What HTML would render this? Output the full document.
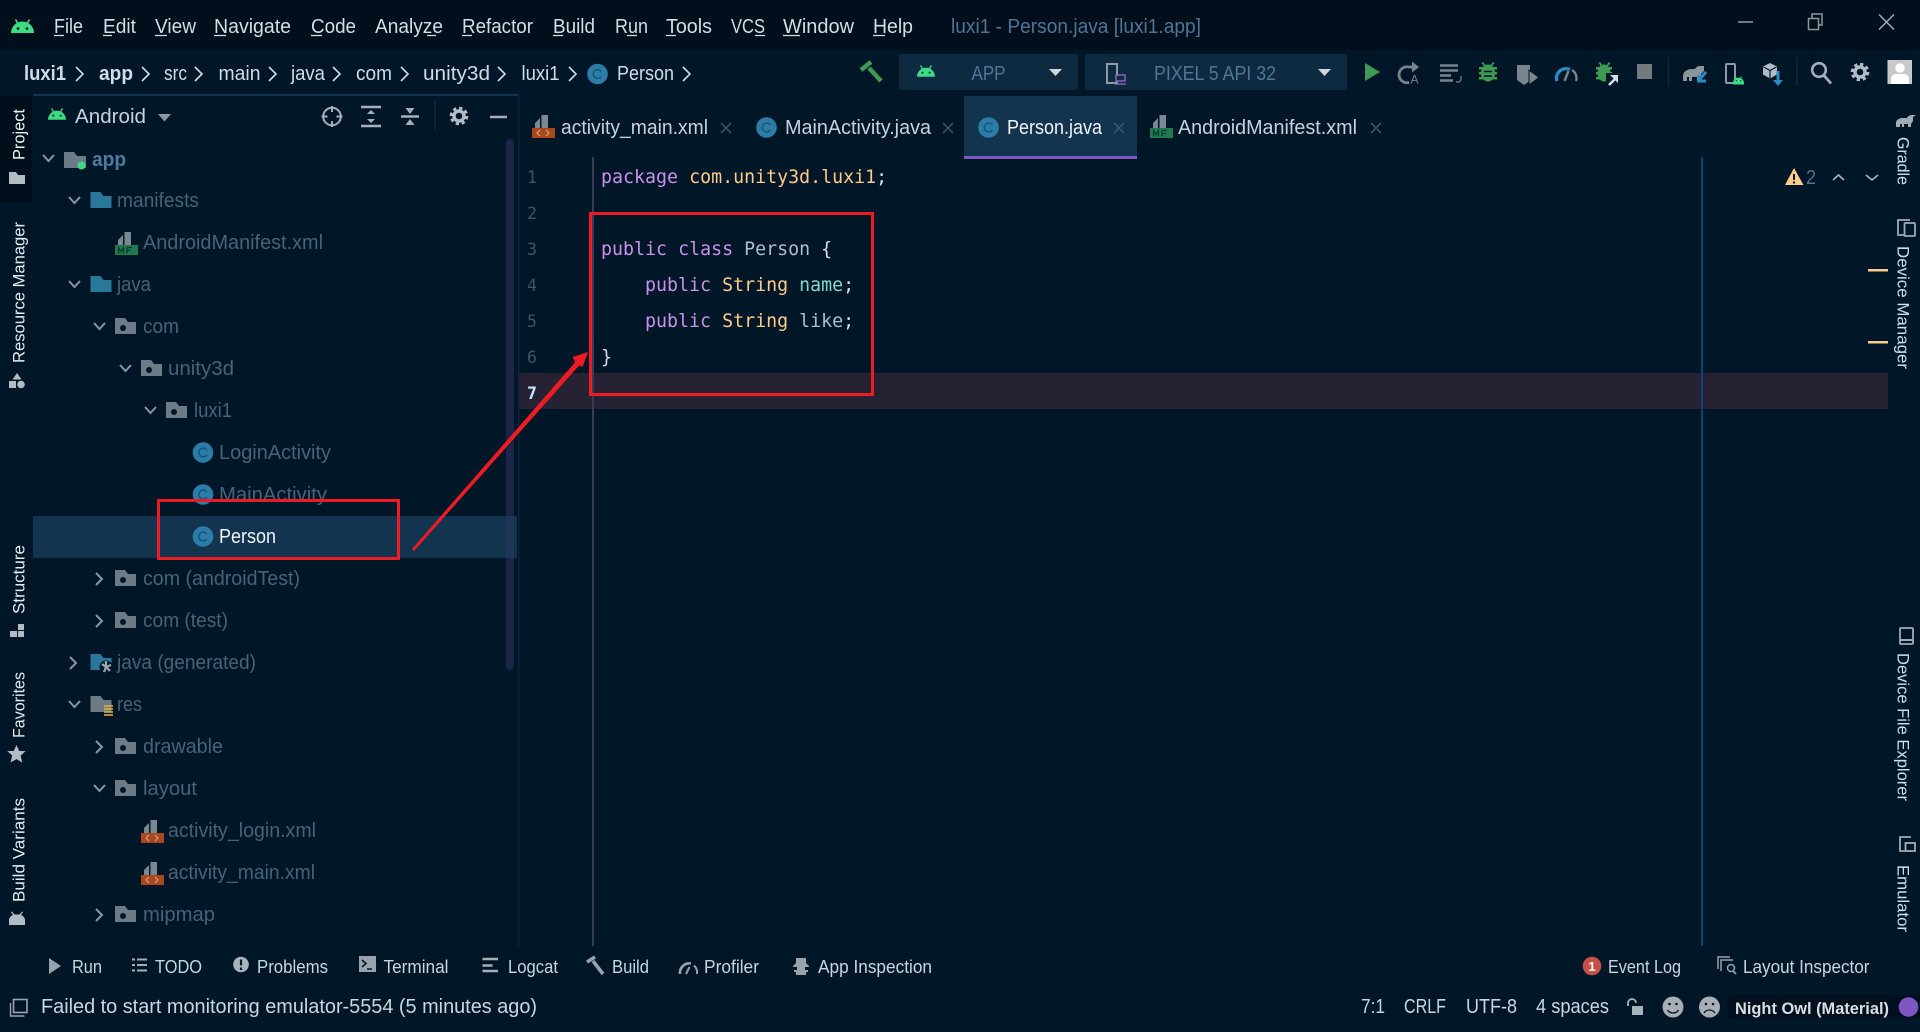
<!DOCTYPE html>
<html lang="en">
<head>
<meta charset="utf-8">
<title>luxi1 - Person.java [luxi1.app]</title>
<style>
html,body{margin:0;padding:0;background:#011627;width:1920px;height:1032px;overflow:hidden}
svg{display:block}
text{font-family:"Liberation Sans",sans-serif;font-size:20px;white-space:pre}
.m{fill:#d3dee6}
.b{fill:#d0dde6}
.t{fill:#466379}
.f{fill:#c4d3de}
.d{fill:#c8d6e0;font-size:18px}
.s{fill:#c8d8e2}
.v{fill:#e3edf3;font-size:17px}
.r{fill:#c5e0f5;font-size:17px}
.c{font-family:"DejaVu Sans Mono","Liberation Mono",monospace;font-size:18.3px;fill:#d6deeb}
.n{font-family:"DejaVu Sans Mono","Liberation Mono",monospace;font-size:16.5px;fill:#3c566c}
.k{fill:#c792ea}.o{fill:#ffcb8b}.g{fill:#7fdbca}.p{fill:#a9c0cd}
</style>
</head>
<body>
<svg xmlns="http://www.w3.org/2000/svg" width="1920" height="1032" viewBox="0 0 1920 1032">
<defs>
<g id="cls"><circle cx="10.5" cy="10.5" r="10.3" fill="#2b7ca6"/><path d="M14.3 8a4.4 4.4 0 1 0 0 5" fill="none" stroke="#17587a" stroke-width="1.6"/></g>
<g id="blue"><path d="M0 0h10l3 4h8v12H0z" fill="#2a7899"/></g>
<g id="pkg"><path d="M0 0h10l3 4h8v12H0z" fill="#6d7b86"/><circle cx="8" cy="10" r="3" fill="#011627"/></g>
<g id="down"><path d="M1 1l5.500 6L12 1" fill="none" stroke="#8798a4" stroke-width="2"/></g>
<g id="right"><path d="M1 1l6 6-6 6" fill="none" stroke="#8798a4" stroke-width="2"/></g>
<g id="file"><path d="M9.500 0h6.500v13H9.500zM3 13V8L8 3V13z" fill="#7a8893"/></g>
<g id="xml"><use href="#file"/><rect y="13" width="23" height="10" fill="#a8481c"/><path d="M8 15l-3 3 3 3M14 15l3 3-3 3" fill="none" stroke="#d8a080" stroke-width="1.200"/></g>
<g id="mf"><use href="#file"/><rect y="13" width="23" height="10" fill="#207a50"/><path d="M3.500 21.500v-6l2.500 4 2.500-4v6M12 21.500v-6h5M12 18.500h4" fill="none" stroke="#0c3d2a" stroke-width="1.300"/></g>
<g id="droid"><path d="M0 13a10 10 0 0 1 20 0z" fill="#3ddc84"/><path d="M4 0.500l2.500 4.500M16 0.500l-2.500 4.500" stroke="#3ddc84" stroke-width="1.500"/><circle cx="6" cy="8.500" r="1.100" fill="#011627"/><circle cx="14" cy="8.500" r="1.100" fill="#011627"/></g>
<g id="gear"><circle r="7.800" fill="none" stroke="#b2bcc4" stroke-width="3" stroke-dasharray="3.300 2.800"/><circle r="5" fill="none" stroke="#b2bcc4" stroke-width="3.400"/></g>
</defs>

<rect width="1920" height="1032" fill="#011627"/>
<rect width="1920" height="50" fill="#010e1b"/>

<!-- Title bar -->
<g transform="translate(11,19)"><path d="M0 14a11.500 11.500 0 0 1 23 0z" fill="#3ddc84"/><path d="M4.500 0.500l3 5M18.500 0.500l-3 5" stroke="#3ddc84" stroke-width="1.700"/><circle cx="7" cy="9.500" r="1.300" fill="#010e1b"/><circle cx="16" cy="9.500" r="1.300" fill="#010e1b"/></g>
<text class="m" x="54" y="33" textLength="29" lengthAdjust="spacingAndGlyphs">File</text>
<text class="m" x="103" y="33" textLength="33" lengthAdjust="spacingAndGlyphs">Edit</text>
<text class="m" x="155" y="33" textLength="41" lengthAdjust="spacingAndGlyphs">View</text>
<text class="m" x="214" y="33" textLength="77" lengthAdjust="spacingAndGlyphs">Navigate</text>
<text class="m" x="311" y="33" textLength="45" lengthAdjust="spacingAndGlyphs">Code</text>
<text class="m" x="375" y="33" textLength="68" lengthAdjust="spacingAndGlyphs">Analyze</text>
<text class="m" x="462" y="33" textLength="71" lengthAdjust="spacingAndGlyphs">Refactor</text>
<text class="m" x="553" y="33" textLength="42" lengthAdjust="spacingAndGlyphs">Build</text>
<text class="m" x="615" y="33" textLength="33" lengthAdjust="spacingAndGlyphs">Run</text>
<text class="m" x="666" y="33" textLength="46" lengthAdjust="spacingAndGlyphs">Tools</text>
<text class="m" x="731" y="33" textLength="34" lengthAdjust="spacingAndGlyphs">VCS</text>
<text class="m" x="783" y="33" textLength="71" lengthAdjust="spacingAndGlyphs">Window</text>
<text class="m" x="873" y="33" textLength="40" lengthAdjust="spacingAndGlyphs">Help</text>
<path d="M54 35.500h10M103 35.500h9M155 35.500h12M214 35.500h12M311 35.500h11M427 35.500h9M462 35.500h10M553 35.500h10M627 35.500h10M666 35.500h10M755 35.500h10M783 35.500h17M873 35.500h12" stroke="#d3dee6" stroke-width="1.200"/>
<text x="951" y="33" textLength="250" lengthAdjust="spacingAndGlyphs" fill="#4f7596">luxi1 - Person.java [luxi1.app]</text>
<path d="M1738 22h15" stroke="#8a98a2" stroke-width="1.600"/>
<path d="M1808.500 18.500h10v11h-10zM1812 18v-4h10v11h-3.500" fill="none" stroke="#8a98a2" stroke-width="1.500"/>
<path d="M1879 14.500l15 15M1894 14.500l-15 15" stroke="#a0adb6" stroke-width="1.500"/>

<!-- Breadcrumb -->
<g style="font-weight:bold"><text class="b" x="24" y="80" textLength="42" lengthAdjust="spacingAndGlyphs">luxi1</text>
<text class="b" x="99" y="80" textLength="34" lengthAdjust="spacingAndGlyphs">app</text></g>
<text class="b" x="164" y="80" textLength="23" lengthAdjust="spacingAndGlyphs">src</text>
<text class="b" x="218.500" y="80" textLength="42" lengthAdjust="spacingAndGlyphs">main</text>
<text class="b" x="291" y="80" textLength="34" lengthAdjust="spacingAndGlyphs">java</text>
<text class="b" x="356" y="80" textLength="36" lengthAdjust="spacingAndGlyphs">com</text>
<text class="b" x="423" y="80" textLength="67" lengthAdjust="spacingAndGlyphs">unity3d</text>
<text class="b" x="521.500" y="80" textLength="38" lengthAdjust="spacingAndGlyphs">luxi1</text>
<text class="b" x="617" y="80" textLength="57" lengthAdjust="spacingAndGlyphs">Person</text>
<path d="M76 67l7 7-7 7M142 67l7 7-7 7M195 67l7 7-7 7M269 67l7 7-7 7M333 67l7 7-7 7M401 67l7 7-7 7M498 67l7 7-7 7M569 67l7 7-7 7M683 67l7 7-7 7" fill="none" stroke="#d0dde6" stroke-width="1.600"/>
<use href="#cls" x="587" y="63.500"/>

<!-- Toolbar -->
<path d="M861 70l10-8M869 68l12 13" stroke="#3f9a52" stroke-width="4.500" fill="none"/>
<rect x="899" y="54" width="179" height="36" rx="2" fill="#0d2a40"/>
<rect x="1085" y="54" width="262" height="36" rx="2" fill="#0d2a40"/>
<use href="#droid" transform="translate(917,65) scale(.9)"/>
<text x="971.500" y="80" textLength="34" lengthAdjust="spacingAndGlyphs" fill="#527596">APP</text>
<path d="M1049 69h13l-6.500 7z" fill="#cfd8de"/>
<path d="M1107 64h10v19h-10z" fill="none" stroke="#8f9aa2" stroke-width="2"/>
<rect x="1116" y="75" width="9" height="6" fill="#0d2a40" stroke="#8e6ac0" stroke-width="1.400"/><path d="M1115 84h11" stroke="#8e6ac0" stroke-width="1.400"/>
<text x="1154" y="80" textLength="122" lengthAdjust="spacingAndGlyphs" fill="#527596">PIXEL 5 API 32</text>
<path d="M1318 69h13l-6.500 7z" fill="#cfd8de"/>
<path d="M1365 63l15 9-15 9z" fill="#3f9a52"/>
<path d="M1415 67h-6a8 8 0 1 0 0 15.500" fill="none" stroke="#7a848c" stroke-width="2.800"/><path d="M1412 61.500l7 5.500-7 5.500z" fill="#7a848c"/><text x="1410.500" y="83.500" style="font-size:12px" fill="#7a848c">A</text>
<path d="M1440 65.500h18M1440 70.500h18M1440 75.500h11M1440 80.500h13" stroke="#7a848c" stroke-width="2.400"/><path d="M1461 76v3a3 3 0 0 1-3 3h-2" fill="none" stroke="#7a848c" stroke-width="1.200"/>
<g fill="#3f9a52"><ellipse cx="1488" cy="73" rx="7" ry="8.500"/><path d="M1479 67h18v2.500h-18zM1479 72h18v2.500h-18zM1479 77h18v2.500h-18zM1483 62l3 4-1.500 1-3-4zM1493 62l-3 4 1.500 1 3-4z"/></g><path d="M1484 71.500h8M1484 76h8" stroke="#011627" stroke-width="1.500"/>
<path d="M1517 65h13v16l-6 4-7-5z" fill="#7a848c"/><path d="M1529 70l10 7.500-10 7.500z" fill="#7a848c" stroke="#011627"/>
<path d="M1557 81a9.500 9.500 0 0 1 13-11.500" fill="none" stroke="#2a8bc5" stroke-width="3.400"/><path d="M1564.500 81l4-10M1572 70a9.500 9.500 0 0 1 4 11" stroke="#7a848c" stroke-width="2.400" fill="none"/>
<g fill="#3f9a52"><ellipse cx="1604" cy="73" rx="6.500" ry="8.500"/><path d="M1596 67h16v2.500h-16zM1596 72h16v2.500h-16zM1596 77h16v2.500h-16z"/><path d="M1600 62l3 4-1.500 1-3-4zM1609 62l-3 4 1.500 1 3-4z"/></g>
<rect x="1606" y="73" width="12" height="13" fill="#011627"/>
<path d="M1609 85l6-6" stroke="#d3dee6" stroke-width="2.600"/><path d="M1610 75h8v8z" fill="#d3dee6"/>
<rect x="1637" y="64" width="15" height="15" fill="#74797e"/>
<path d="M1668.500 57v29M1797 57v29" stroke="#0d2a40" stroke-width="1.500"/>
<path d="M1683 81v-6a9 7 0 0 1 9-6h3a6 5 0 0 1 4-3h5v5l-3 3v7h-4v-4h-5v4h-3v-4h-2v4z" fill="#8a949b"/>
<path d="M1706 72l-7 8v-5M1699 81h7" fill="none" stroke="#2a8bc5" stroke-width="3"/>
<rect x="1726" y="64" width="9" height="19" fill="none" stroke="#8f9aa2" stroke-width="2" rx="1"/>
<g transform="translate(1733,76) scale(.55)"><use href="#droid"/></g><rect x="1733" y="82.500" width="11" height="2" fill="#3ddc84"/>
<path d="M1770 63l7 3.500v8l-7 4-7-4v-8z" fill="#b2bcc4"/><path d="M1763.500 67l6.500 3.500 6.500-3.500M1770 70.500v8" stroke="#011627" stroke-width="1.200" fill="none"/>
<path d="M1778 71v12" stroke="#2a8bc5" stroke-width="3"/><path d="M1773 80h10l-5 6z" fill="#2a8bc5"/>
<circle cx="1819" cy="70" r="6.800" fill="none" stroke="#a6b0b8" stroke-width="2.600"/><path d="M1824 75.500l7 8" stroke="#a6b0b8" stroke-width="2.800"/>
<use href="#gear" x="1860" y="72"/>
<rect x="1887.500" y="60" width="24.500" height="24" fill="#c9c9c9"/><circle cx="1900" cy="68" r="4.800" fill="#fff"/><path d="M1891 84v-5a5 5 0 0 1 5-5h8a5 5 0 0 1 5 5v5z" fill="#fff"/>

<!-- Left strip -->
<rect x="0" y="96" width="32" height="106" fill="#010e1b"/>
<text class="v" transform="translate(24.500,160) rotate(-90)" textLength="51" lengthAdjust="spacingAndGlyphs" style="fill:#f2f5f7">Project</text>
<path d="M9 172h7l2 3h7v9H9z" fill="#b2bcc4"/>
<text class="v" transform="translate(24.500,363) rotate(-90)" textLength="141" lengthAdjust="spacingAndGlyphs">Resource Manager</text>
<path d="M17 373l4.500 6.500h-9z" fill="#b2bcc4"/><rect x="9" y="381" width="7" height="7" fill="#b2bcc4"/><circle cx="21" cy="384.500" r="3.800" fill="#b2bcc4"/>
<text class="v" transform="translate(24.500,614) rotate(-90)" textLength="69" lengthAdjust="spacingAndGlyphs">Structure</text>
<path d="M18 624h6v6h-6zM10 631h7v6h-7zM18 631h6v6h-6z" fill="#b2bcc4"/>
<text class="v" transform="translate(24.500,738) rotate(-90)" textLength="66" lengthAdjust="spacingAndGlyphs">Favorites</text>
<path d="M16.500 745l2.700 6h6.500l-5 4.500 1.500 7-5.700-3.400-6 3.400 1.700-7-5-4.500h6.500z" fill="#b2bcc4"/>
<text class="v" transform="translate(24.500,902) rotate(-90)" textLength="104" lengthAdjust="spacingAndGlyphs">Build Variants</text>
<path d="M9 925v-5a8 6 0 0 1 4-5l-2-3 1-.5 2.500 3h5l2.500-3 1 .5-2 3a8 6 0 0 1 4 5v5z" fill="#b2bcc4"/>

<!-- Project panel -->
<rect x="33" y="94" width="485" height="2" fill="#0d3552"/>
<use href="#droid" transform="translate(48,108) scale(.9)"/>
<text x="75" y="123" textLength="71" lengthAdjust="spacingAndGlyphs" fill="#c4d3de">Android</text>
<path d="M158 114h13l-6.500 7.500z" fill="#8798a4"/>
<circle cx="332" cy="116.500" r="8.800" fill="none" stroke="#a6b0b8" stroke-width="2"/><path d="M332 106v6M332 121v6M321.500 116.500h6M336.500 116.500h6" stroke="#a6b0b8" stroke-width="2"/>
<path d="M361 107h20M361 126h20" stroke="#a6b0b8" stroke-width="2.400"/><path d="M371 110l4 4h-8zM371 123l4-4h-8z" fill="#a6b0b8"/>
<path d="M401 116.500h18" stroke="#a6b0b8" stroke-width="2.400"/><path d="M410 114l-4.500-6h9zM410 119l-4.500 6h9z" fill="#a6b0b8"/>
<path d="M435 100v30" stroke="#0d2a40" stroke-width="1.500"/>
<use href="#gear" x="459" y="116"/>
<path d="M490 117h17" stroke="#a6b0b8" stroke-width="2.600"/>
<rect x="33" y="516" width="484" height="42" fill="#13344f"/>
<rect x="506" y="139" width="8" height="531" rx="4" fill="#1a2547"/>
<rect x="506" y="516" width="8" height="42" fill="#1e3558"/>
<rect x="518" y="94" width="1.500" height="852" fill="#0c2437"/>

<!-- Tree -->
<use href="#down" x="42" y="154"/>
<path d="M64 152h10l3 4h9v12H64z" fill="#6d7b86"/><circle cx="81.500" cy="165.500" r="4" fill="#3ddc84"/>
<text x="92" y="166" textLength="34" lengthAdjust="spacingAndGlyphs" fill="#4f7a9e" style="font-weight:bold">app</text>
<use href="#down" x="68" y="196"/><use href="#blue" x="90.500" y="192"/>
<text class="t" x="117" y="207" textLength="82" lengthAdjust="spacingAndGlyphs">manifests</text>
<use href="#mf" x="115" y="232"/>
<text class="t" x="143" y="249" textLength="180" lengthAdjust="spacingAndGlyphs">AndroidManifest.xml</text>
<use href="#down" x="68" y="280"/><use href="#blue" x="90.500" y="276"/>
<text class="t" x="117" y="291" textLength="34" lengthAdjust="spacingAndGlyphs">java</text>
<use href="#down" x="93" y="322"/><use href="#pkg" x="115" y="318"/>
<text class="t" x="143" y="333" textLength="36" lengthAdjust="spacingAndGlyphs">com</text>
<use href="#down" x="119" y="364"/><use href="#pkg" x="141" y="360"/>
<text class="t" x="168" y="375" textLength="66" lengthAdjust="spacingAndGlyphs">unity3d</text>
<use href="#down" x="144" y="406"/><use href="#pkg" x="166" y="402"/>
<text class="t" x="194" y="417" textLength="38" lengthAdjust="spacingAndGlyphs">luxi1</text>
<use href="#cls" x="192.500" y="442"/>
<text class="t" x="219" y="459" textLength="112" lengthAdjust="spacingAndGlyphs">LoginActivity</text>
<use href="#cls" x="192.500" y="484"/>
<text class="t" x="219" y="501" textLength="108" lengthAdjust="spacingAndGlyphs">MainActivity</text>
<use href="#cls" x="192.500" y="526"/>
<text x="219" y="543" textLength="57" lengthAdjust="spacingAndGlyphs" fill="#f0f4f7">Person</text>
<use href="#right" x="95" y="572"/><use href="#pkg" x="115" y="570"/>
<text class="t" x="143" y="585" textLength="157" lengthAdjust="spacingAndGlyphs">com (androidTest)</text>
<use href="#right" x="95" y="614"/><use href="#pkg" x="115" y="612"/>
<text class="t" x="143" y="627" textLength="85" lengthAdjust="spacingAndGlyphs">com (test)</text>
<use href="#right" x="69" y="656"/><use href="#blue" x="90.500" y="654"/>
<circle cx="106" cy="667" r="6.500" fill="#011627"/><path d="M106 661v6l-4-3M106 667l5-2M106 667l-2 5M106 667l4 4" stroke="#9aa8b2" stroke-width="2.200" fill="none"/>
<text class="t" x="117" y="669" textLength="139" lengthAdjust="spacingAndGlyphs">java (generated)</text>
<use href="#down" x="68" y="700"/><path d="M90.500 696h10l3 4h8v12H90.500z" fill="#6d7b86"/>
<path d="M104 706h9M104 709h9M104 712h9M104 715h9" stroke="#eab13e" stroke-width="1.500"/>
<text class="t" x="117" y="711" textLength="25" lengthAdjust="spacingAndGlyphs">res</text>
<use href="#right" x="95" y="740"/><use href="#pkg" x="115" y="738"/>
<text class="t" x="143" y="753" textLength="80" lengthAdjust="spacingAndGlyphs">drawable</text>
<use href="#down" x="93" y="784"/><use href="#pkg" x="115" y="780"/>
<text class="t" x="143" y="795" textLength="54" lengthAdjust="spacingAndGlyphs">layout</text>
<use href="#xml" x="141" y="820"/>
<text class="t" x="168" y="837" textLength="148" lengthAdjust="spacingAndGlyphs">activity_login.xml</text>
<use href="#xml" x="141" y="862"/>
<text class="t" x="168" y="879" textLength="147" lengthAdjust="spacingAndGlyphs">activity_main.xml</text>
<use href="#right" x="95" y="908"/><use href="#pkg" x="115" y="906"/>
<text class="t" x="143" y="921" textLength="72" lengthAdjust="spacingAndGlyphs">mipmap</text>

<!-- Tabs -->
<rect x="964" y="96" width="173" height="60" fill="#13344f"/>
<rect x="964" y="156" width="173" height="3" fill="#7e57c2"/>
<use href="#xml" x="532" y="115"/>
<text class="f" x="561" y="134" textLength="147" lengthAdjust="spacingAndGlyphs">activity_main.xml</text>
<path d="M721 123l10 10M731 123l-10 10M943 123l10 10M953 123l-10 10M1114 123l10 10M1124 123l-10 10M1371 123l10 10M1381 123l-10 10" stroke="#445a6c" stroke-width="1.400"/>
<use href="#cls" x="756" y="117"/>
<text class="f" x="785" y="134" textLength="146" lengthAdjust="spacingAndGlyphs">MainActivity.java</text>
<use href="#cls" x="978" y="117"/>
<text x="1007" y="134" textLength="95" lengthAdjust="spacingAndGlyphs" fill="#f0f4f7">Person.java</text>
<use href="#mf" x="1150" y="115"/>
<text class="f" x="1178" y="134" textLength="179" lengthAdjust="spacingAndGlyphs">AndroidManifest.xml</text>

<!-- Editor -->
<rect x="519" y="373" width="1369" height="36" fill="#262233"/>
<rect x="592" y="157" width="2" height="789" fill="#3b3a5c"/>
<rect x="1701" y="157" width="2" height="789" fill="#0b4570"/>
<text class="n" x="527" y="183">1</text>
<text class="n" x="527" y="219">2</text>
<text class="n" x="527" y="255">3</text>
<text class="n" x="527" y="291">4</text>
<text class="n" x="527" y="327">5</text>
<text class="n" x="527" y="363">6</text>
<text class="n" x="527" y="399" style="fill:#c5e4fd;font-weight:bold">7</text>
<text class="c" x="601" y="183"><tspan class="k">package</tspan> <tspan class="o">com.unity3d.luxi1</tspan>;</text>
<text class="c" x="601" y="255"><tspan class="k">public</tspan> <tspan class="k">class</tspan> <tspan class="p">Person</tspan> {</text>
<text class="c" x="645" y="291"><tspan class="k">public</tspan> <tspan class="o">String</tspan> <tspan class="g">name</tspan>;</text>
<text class="c" x="645" y="327"><tspan class="k">public</tspan> <tspan class="o">String</tspan> <tspan class="p">like</tspan>;</text>
<text class="c" x="601" y="363">}</text>
<path d="M1794 168l9.500 17h-18.500z" fill="#ffcb8b"/><path d="M1794 174v6M1794 181.500v2" stroke="#011627" stroke-width="2"/>
<text x="1806" y="184" textLength="10" lengthAdjust="spacingAndGlyphs" fill="#4f7596">2</text>
<path d="M1833 180l5.500-5 5.500 5M1866 175l6 5 6-5" fill="none" stroke="#a8b6c0" stroke-width="1.600"/>
<rect x="1868" y="269" width="20" height="2.500" fill="#ffcb8b"/>
<rect x="1868" y="341" width="20" height="2.500" fill="#ffcb8b"/>

<!-- Right strip -->
<path d="M1896 127v-5a7 5 0 0 1 8-4h3a5 4 0 0 1 5-3l4 0-3 2v4l-2 3v3h-3v-3h-4v3h-2v-3h-2v3z" fill="#a0acb4"/>
<text class="r" transform="translate(1897.500,137) rotate(90)" textLength="48" lengthAdjust="spacingAndGlyphs">Gradle</text>
<path d="M1898 234v-14h12M1897 235h7" fill="none" stroke="#a0acb4" stroke-width="1.800"/><rect x="1904.500" y="223" width="10.500" height="13" rx="1" fill="none" stroke="#a0acb4" stroke-width="1.800"/>
<text class="r" transform="translate(1897.500,246) rotate(90)" textLength="123" lengthAdjust="spacingAndGlyphs">Device Manager</text>
<rect x="1900" y="628" width="13" height="16" rx="1" fill="none" stroke="#a0acb4" stroke-width="1.800"/><path d="M1900 640h13" stroke="#a0acb4" stroke-width="2"/>
<text class="r" transform="translate(1897.500,653) rotate(90)" textLength="148" lengthAdjust="spacingAndGlyphs">Device File Explorer</text>
<path d="M1900 850v-13h11M1899 851h6" fill="none" stroke="#a0acb4" stroke-width="1.800"/><rect x="1905.500" y="843" width="9.500" height="8" fill="none" stroke="#a0acb4" stroke-width="1.800"/>
<text class="r" transform="translate(1897.500,865) rotate(90)" textLength="67" lengthAdjust="spacingAndGlyphs">Emulator</text>

<!-- Bottom tool bar -->
<path d="M49 958l12 8-12 8z" fill="#98a4ac"/>
<text class="d" x="72" y="973" textLength="30" lengthAdjust="spacingAndGlyphs">Run</text>
<path d="M132 959.500h3M137 959.500h10M132 965h3M137 965h10M132 970.500h3M137 970.500h10" stroke="#a4b0b8" stroke-width="2"/>
<text class="d" x="155" y="973" textLength="47" lengthAdjust="spacingAndGlyphs">TODO</text>
<circle cx="241" cy="964.500" r="7.800" fill="#a8b4bc"/><path d="M241 959.500v6M241 967.500v2.500" stroke="#011627" stroke-width="2.200"/>
<text class="d" x="257" y="973" textLength="71" lengthAdjust="spacingAndGlyphs">Problems</text>
<rect x="359" y="956" width="17" height="16" fill="#98a4ac"/><path d="M362 960l4 3.500-4 3.500M367 969h5" fill="none" stroke="#011627" stroke-width="1.600"/>
<text class="d" x="383.500" y="973" textLength="65" lengthAdjust="spacingAndGlyphs">Terminal</text>
<path d="M482.500 959h15.500M482.500 965.500h10M482.500 971h15.500" stroke="#a4b0b8" stroke-width="2.400"/>
<text class="d" x="508" y="973" textLength="50" lengthAdjust="spacingAndGlyphs">Logcat</text>
<path d="M587 962l8-5M593 961l10 13" stroke="#98a4ac" stroke-width="3.500" fill="none"/>
<text class="d" x="612" y="973" textLength="37" lengthAdjust="spacingAndGlyphs">Build</text>
<path d="M680 974a9.500 9.500 0 0 1 11-10.500" fill="none" stroke="#98a4ac" stroke-width="2.600"/><path d="M686 974l3.500-7M694 965.500a9.500 9.500 0 0 1 3 8.500" stroke="#98a4ac" stroke-width="2" fill="none"/>
<text class="d" x="704" y="973" textLength="55" lengthAdjust="spacingAndGlyphs">Profiler</text>
<path d="M796 958h10v5l3 3v1h-4v3h3v2h-14v-2h3v-3h-4v-1l3-3z" fill="#98a4ac"/><rect x="796" y="972" width="10" height="3" fill="#98a4ac"/>
<text class="d" x="818" y="973" textLength="114" lengthAdjust="spacingAndGlyphs">App Inspection</text>
<circle cx="1592" cy="966" r="9.300" fill="#c8504a"/><text x="1592" y="971" text-anchor="middle" style="font-size:13px;font-weight:bold" fill="#fff">1</text>
<text class="d" x="1608" y="973" textLength="73" lengthAdjust="spacingAndGlyphs">Event Log</text>
<path d="M1718 969v-12h12M1721 971v-11h12" fill="none" stroke="#98a4ac" stroke-width="1.500"/><circle cx="1731" cy="968" r="3.500" fill="#011627" stroke="#98a4ac" stroke-width="1.500"/><path d="M1733 971l3 3" stroke="#98a4ac" stroke-width="1.800"/>
<text class="d" x="1743" y="973" textLength="126.500" lengthAdjust="spacingAndGlyphs">Layout Inspector</text>

<!-- Status bar -->
<path d="M10.500 1003v13h14" fill="none" stroke="#9aa6ae" stroke-width="1.400"/><rect x="13.500" y="999.500" width="13.500" height="13" fill="none" stroke="#9aa6ae" stroke-width="1.600"/>
<text class="s" x="41" y="1013" textLength="496" lengthAdjust="spacingAndGlyphs">Failed to start monitoring emulator-5554 (5 minutes ago)</text>
<text class="s" x="1361" y="1013" textLength="24" lengthAdjust="spacingAndGlyphs">7:1</text>
<text class="s" x="1404" y="1013" textLength="42" lengthAdjust="spacingAndGlyphs">CRLF</text>
<text class="s" x="1466" y="1013" textLength="51" lengthAdjust="spacingAndGlyphs">UTF-8</text>
<text class="s" x="1536" y="1013" textLength="73" lengthAdjust="spacingAndGlyphs">4 spaces</text>
<path d="M1628 1006v-3a4 4 0 0 1 8 0" fill="none" stroke="#a8b4bc" stroke-width="1.800"/><rect x="1632" y="1006" width="11" height="9" fill="#a8b4bc"/>
<circle cx="1673" cy="1007" r="10.500" fill="#a8aeb3"/><circle cx="1669.500" cy="1004" r="1.300" fill="#011627"/><circle cx="1676.500" cy="1004" r="1.300" fill="#011627"/><path d="M1667.500 1010a6.500 6.500 0 0 0 11 0" fill="none" stroke="#011627" stroke-width="1.300"/>
<circle cx="1709.500" cy="1007" r="10.500" fill="#a8aeb3"/><circle cx="1706" cy="1004" r="1.300" fill="#011627"/><circle cx="1713" cy="1004" r="1.300" fill="#011627"/><path d="M1704 1013a6.500 6.500 0 0 1 11 0" fill="none" stroke="#011627" stroke-width="1.300"/>
<path d="M1732 995H1920V1018H1732a5 5 0 0 1-5-5v-13a5 5 0 0 1 5-5z" fill="#010f1e"/>
<text x="1735" y="1014" textLength="154" lengthAdjust="spacingAndGlyphs" style="font-size:17px;font-weight:bold" fill="#d8dee3">Night Owl (Material)</text>
<circle cx="1908.500" cy="1007" r="9.800" fill="#7e57c2"/>

<!-- Annotations -->
<rect x="590.500" y="213.500" width="282" height="181" fill="none" stroke="#ed1c24" stroke-width="3"/>
<rect x="158.500" y="500.500" width="240" height="58" fill="none" stroke="#ed1c24" stroke-width="3"/>
<path d="M412 549L575.100 362.300 572.700 357 588 352 582.700 366.700 578.900 365.700 414 551z" fill="#ed1c24"/>
</svg>
</body>
</html>
